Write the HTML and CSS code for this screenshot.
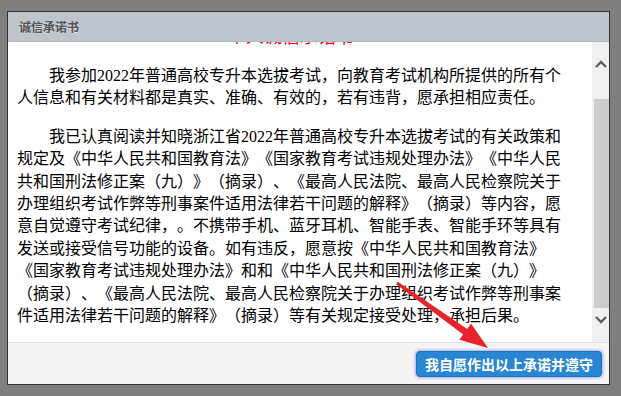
FILE: index.html
```html
<!DOCTYPE html>
<html lang="zh-CN">
<head>
<meta charset="utf-8">
<title>诚信承诺书</title>
<link rel="stylesheet" href="styles.css">
</head>
<body>
<div class="dialog">
  <div class="dlg-head">诚信承诺书</div>
  <div class="dlg-body">
    <div class="viewport">
      <div class="doc">
        <h2 class="doc-title">个人诚信承诺书</h2>
        <p>我参加2022年普通高校专升本选拔考试，向教育考试机构所提供的所有个人信息和有关材料都是真实、准确、有效的，若有违背，愿承担相应责任。</p>
        <p>我已认真阅读并知晓浙江省2022年普通高校专升本选拔考试的有关政策和规定及《中华人民共和国教育法》《国家教育考试违规处理办法》《中华人民共和国刑法修正案（九）》（摘录）、《最高人民法院、最高人民检察院关于办理组织考试作弊等刑事案件适用法律若干问题的解释》（摘录）等内容，愿意自觉遵守考试纪律，。不携带手机、蓝牙耳机、智能手表、智能手环等具有发送或接受信号功能的设备。如有违反，愿意按《中华人民共和国教育法》《国家教育考试违规处理办法》和和《中华人民共和国刑法修正案（九）》（摘录）、《最高人民法院、最高人民检察院关于办理组织考试作弊等刑事案件适用法律若干问题的解释》（摘录）等有关规定接受处理，承担后果。</p>
      </div>
    </div>
    <div class="scrollbar">
      <svg class="chev chev-up" width="12" height="8" viewBox="0 0 12 8"><path d="M1 7 L6 2 L11 7" fill="none" stroke="#5f5f5f" stroke-width="2.4"/></svg>
      <div class="thumb"></div>
      <svg class="chev chev-down" width="12" height="8" viewBox="0 0 12 8"><path d="M1 1 L6 6 L11 1" fill="none" stroke="#5f5f5f" stroke-width="2.4"/></svg>
    </div>
  </div>
  <div class="dlg-foot">
    <button class="btn-agree" type="button">我自愿作出以上承诺并遵守</button>
  </div>
</div>
<svg class="annot" width="621" height="396" viewBox="0 0 621 396">
  <polygon points="397.9,281.8 467.2,328.9 471.0,323.6 488,348 459.4,339.8 463.2,334.6 396.1,284.2" fill="#e8232b"/>
</svg>
</body>
</html>
```
FILE: styles.css
```css
html, body {
  margin: 0;
  padding: 0;
}
body {
  position: relative;
  width: 621px;
  height: 396px;
  box-sizing: border-box;
  padding: 11px 0 0 7px;
  background: #7f7f7f;
  overflow: hidden;
  font-family: "Noto Sans CJK SC", sans-serif;
}
.dialog {
  width: 603px;
  height: 374px;
  box-sizing: border-box;
  border: 1px solid #333;
  background: #fff;
  display: flex;
  flex-direction: column;
}
.dlg-head {
  height: 29px;
  flex: none;
  background: #bdc5cc;
  border-bottom: 1px solid #b2bac2;
  box-sizing: content-box;
  padding-left: 11px;
  display: flex;
  align-items: center;
  font-size: 12px;
  font-weight: bold;
  color: #555;
  text-shadow: 0 1px 0 rgba(255,255,255,0.4);
}
.dlg-body {
  height: 300px;
  flex: none;
  display: flex;
}
.viewport {
  flex: 1;
  overflow: hidden;
  background: #fff;
}
.doc {
  margin-top: -19px;
  padding: 0 27px 0 9px;
  font-family: "Liberation Serif", "Noto Sans CJK SC", serif;
  font-size: 16px;
  line-height: 22.4px;
  color: #000;
  text-spacing-trim: space-all;
}
.doc-title {
  margin: 0 0 18px;
  text-align: center;
  font-family: "Noto Sans CJK SC", sans-serif;
  font-size: 18px;
  line-height: 24px;
  font-weight: normal;
  color: #f00;
}
.doc p {
  margin: 0 0 16px;
  text-indent: 2em;
}
.scrollbar {
  width: 17px;
  flex: none;
  background: #f0f0f0;
  display: flex;
  flex-direction: column;
  align-items: center;
}
.chev {
  display: block;
  flex: none;
}
.chev-up {
  margin-top: 18px;
}
.thumb {
  width: 15px;
  height: 209px;
  margin-top: 31px;
  margin-left: 1px;
  background: #cdcdcd;
}
.chev-down {
  margin-top: 8px;
}
.dlg-foot {
  flex: 1;
  background: #f5f5f5;
  border-top: 1px solid #dde1e7;
  display: flex;
  justify-content: flex-end;
  align-items: flex-start;
  padding: 8px 7px 0 0;
}
.btn-agree {
  height: 26px;
  width: 186px;
  padding: 0;
  border: 1px solid #1f74bb;
  border-radius: 4px;
  background: #2886d2;
  color: #fff;
  font-family: "Noto Sans CJK SC", sans-serif;
  font-size: 14px;
  font-weight: bold;
  line-height: 24px;
  box-shadow: 0 0 3px 1px rgba(90, 110, 240, 0.55);
}
.annot {
  position: absolute;
  left: 0;
  top: 0;
  pointer-events: none;
}
```
